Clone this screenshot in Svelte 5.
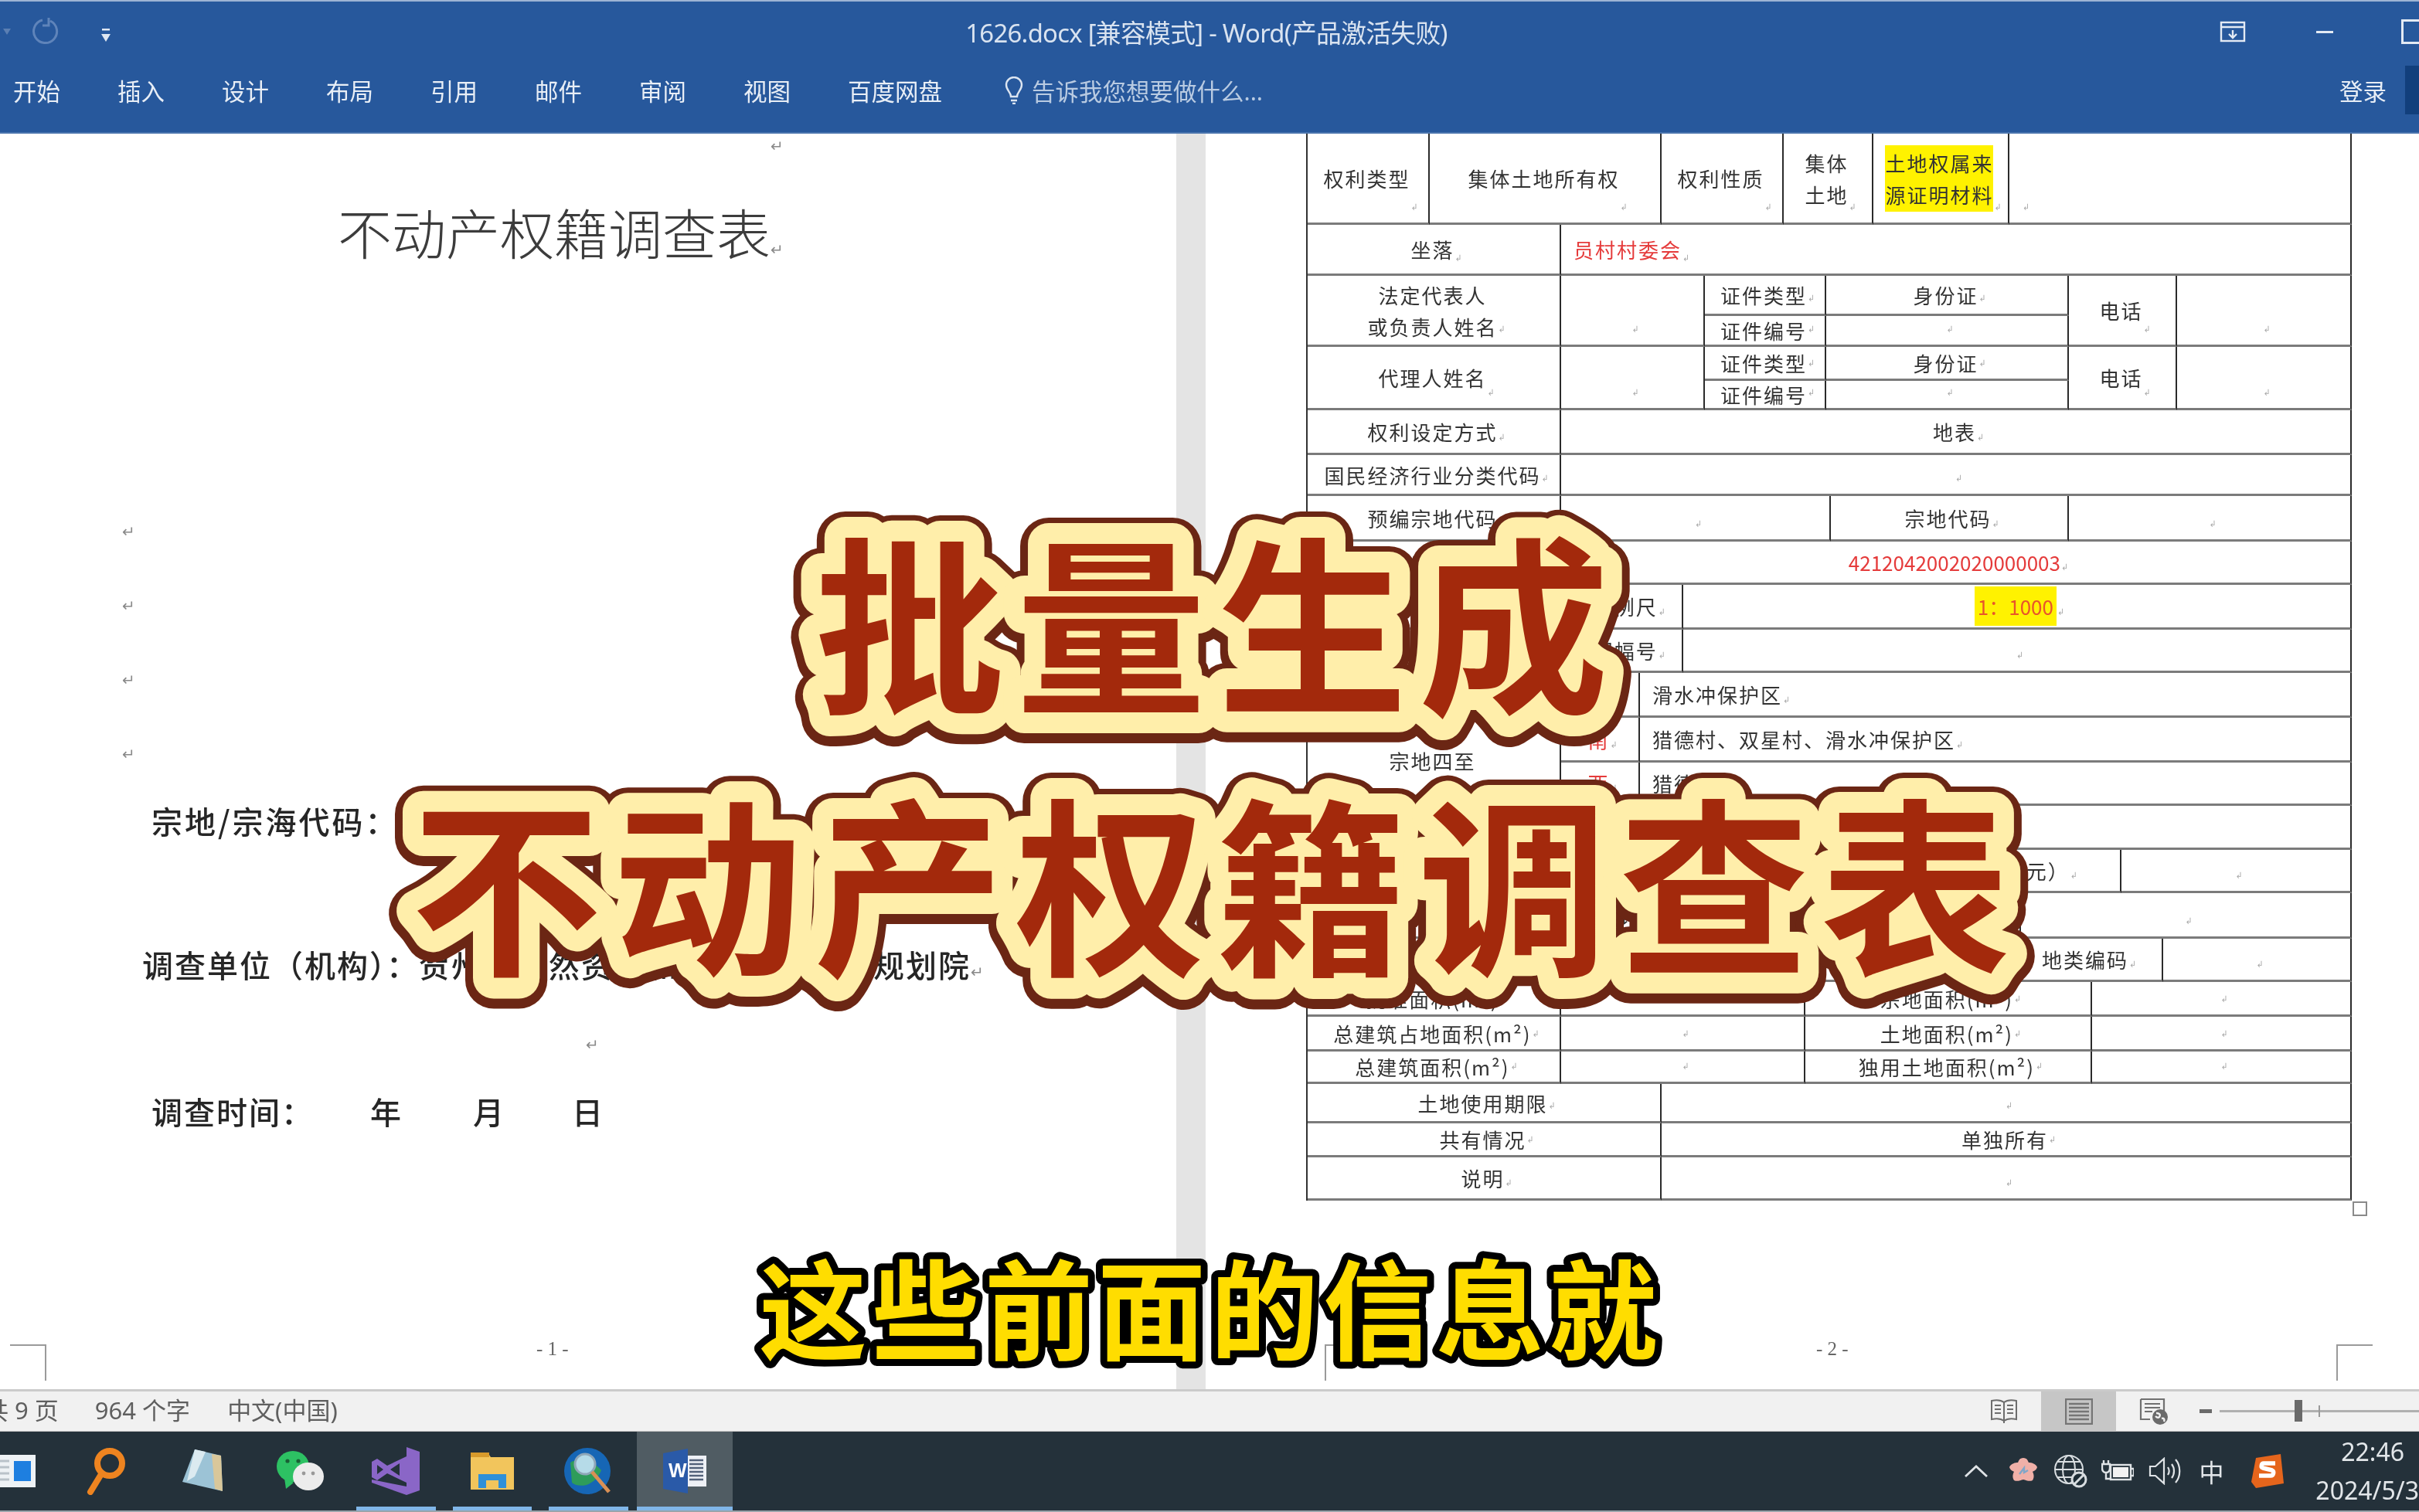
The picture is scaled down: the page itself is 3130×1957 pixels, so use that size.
<script>
    const tabs = ["开始", "插入", "设计", "布局", "引用", "邮件", "审阅", "视图", "百度网盘"];

    // cell: [x1, x2, y1, y2, text, style] in page pixels
    const cells = [
        [1690, 1848, 172, 290, "权利类型"],
        [1848, 2148, 172, 290, "集体土地所有权"],
        [2148, 2306, 172, 290, "权利性质"],
        [2306, 2422, 172, 290, "集体\n土地"],
        [2422, 2598, 172, 290, "土地权属来\n源证明材料", "hl"],
        [2598, 3041, 172, 290, "", "left"],
        [1690, 2018, 290, 356, "坐落"],
        [2018, 3041, 290, 356, "员村村委会", "left red"],
        [1690, 2018, 356, 448, "法定代表人\n或负责人姓名"],
        [2018, 2204, 356, 448, ""],
        [2204, 2361, 356, 408, "证件类型"],
        [2361, 2675, 356, 408, "身份证"],
        [2204, 2361, 408, 448, "证件编号"],
        [2361, 2675, 408, 448, ""],
        [2675, 2815, 356, 448, "电话"],
        [2815, 3041, 356, 448, ""],
        [1690, 2018, 448, 530, "代理人姓名"],
        [2018, 2204, 448, 530, ""],
        [2204, 2361, 448, 492, "证件类型"],
        [2361, 2675, 448, 492, "身份证"],
        [2204, 2361, 492, 530, "证件编号"],
        [2361, 2675, 492, 530, ""],
        [2675, 2815, 448, 530, "电话"],
        [2815, 3041, 448, 530, ""],
        [1690, 2018, 530, 588, "权利设定方式"],
        [2018, 3041, 530, 588, "地表"],
        [1690, 2018, 588, 641, "国民经济行业分类代码"],
        [2018, 3041, 588, 641, ""],
        [1690, 2018, 641, 700, "预编宗地代码"],
        [2018, 2367, 641, 700, ""],
        [2367, 2675, 641, 700, "宗地代码"],
        [2675, 3041, 641, 700, ""],
        [1690, 2018, 700, 756, "不动产单元号"],
        [2018, 3041, 700, 756, "4212042002020000003", "red num"],
        [1690, 2176, 756, 814, "比例尺", "right near"],
        [2176, 3041, 756, 814, "1：1000", "hl orange num"],
        [1690, 2176, 814, 870, "图幅号", "right near"],
        [2176, 3041, 814, 870, ""],
        [1690, 2018, 870, 1099, "宗地四至"],
        [2018, 2120, 870, 928, "东", "red"],
        [2120, 3041, 870, 928, "滑水冲保护区", "left"],
        [2018, 2120, 928, 986, "南", "red"],
        [2120, 3041, 928, 986, "猎德村、双星村、滑水冲保护区", "left"],
        [2018, 2120, 986, 1042, "西", "red"],
        [2120, 3041, 986, 1042, "猎德村", "left"],
        [2018, 2120, 1042, 1099, "北", "red"],
        [2120, 3041, 1042, 1099, "", "left"],
        [1690, 2018, 1099, 1155, "等级"],
        [2018, 2743, 1099, 1155, "价格（万元）", "right"],
        [2743, 3041, 1099, 1155, ""],
        [1690, 2613, 1155, 1214, "许可用途"],
        [2613, 3041, 1155, 1214, ""],
        [1690, 2600, 1214, 1270, "批准用途"],
        [2600, 2797, 1214, 1270, "地类编码"],
        [2797, 3041, 1214, 1270, ""],
        [1690, 2018, 1270, 1315, "批准面积(m²)"],
        [2018, 2334, 1270, 1315, ""],
        [2334, 2705, 1270, 1315, "宗地面积(m²)"],
        [2705, 3041, 1270, 1315, ""],
        [1690, 2018, 1315, 1360, "总建筑占地面积(m²)"],
        [2018, 2334, 1315, 1360, ""],
        [2334, 2705, 1315, 1360, "土地面积(m²)"],
        [2705, 3041, 1315, 1360, ""],
        [1690, 2018, 1360, 1402, "总建筑面积(m²)"],
        [2018, 2334, 1360, 1402, ""],
        [2334, 2705, 1360, 1402, "独用土地面积(m²)"],
        [2705, 3041, 1360, 1402, ""],
        [1690, 2148, 1402, 1453, "土地使用期限"],
        [2148, 3041, 1402, 1453, ""],
        [1690, 2148, 1453, 1497, "共有情况"],
        [2148, 3041, 1453, 1497, "单独所有"],
        [1690, 2148, 1497, 1553, "说明"],
        [2148, 3041, 1497, 1553, ""],
    ];

    const xs = [...new Set(cells.flatMap((c) => [c[0], c[1]]))].sort((a, b) => a - b);
    const ys = [...new Set(cells.flatMap((c) => [c[2], c[3]]))].sort((a, b) => a - b);
    const track = (list) => list.slice(1).map((v, i) => `${v - list[i]}px`).join(" ");
    const area = (c) =>
        `grid-area:${ys.indexOf(c[2]) + 1}/${xs.indexOf(c[0]) + 1}/${ys.indexOf(c[3]) + 1}/${xs.indexOf(c[1]) + 1}`;
    const isHl = (c) => (c[5] || "").includes("hl");
</script>

<div class="screen">
    <header class="ribbon">
        <div class="titlerow">
            <div class="qat">
                <svg width="12" height="10" viewBox="0 0 12 10"><path d="M1 1h10L6 9z" fill="#5b7fb3" /></svg>
                <svg class="undo" width="38" height="38" viewBox="0 0 38 38" fill="none" stroke="#5f84ba" stroke-width="3"><path d="M14 4a15 15 0 1 0 10 1M22 1v10h-8" /></svg>
                <svg class="more" width="14" height="18" viewBox="0 0 14 18" fill="#dfe7f2"><rect x="2" y="0" width="10" height="2.5" /><path d="M1 7h12l-6 10z" /></svg>
            </div>
            <div class="doc-title">1626.docx [兼容模式] - Word(产品激活失败)</div>
            <div class="winctl">
                <svg width="34" height="28" viewBox="0 0 34 28" fill="none" stroke="#e3eaf4" stroke-width="2.4"><rect x="2" y="2" width="30" height="24" /><path d="M2 8h30M17 12v10M12 17l5 5 5-5" /></svg>
                <i class="minimize"></i>
                <i class="restore"></i>
            </div>
        </div>
        <nav class="tabrow">
            {#each tabs as tab}
                <span>{tab}</span>
            {/each}
            <svg class="bulb" width="24" height="36" viewBox="0 0 24 36" fill="none" stroke="#dce5f1" stroke-width="2.4"><path d="M8 26c0-6-6-8-6-15a10 10 0 0 1 20 0c0 7-6 9-6 15zM8 31h8M10 35h4" /></svg>
            <span class="hint">告诉我您想要做什么...</span>
            <span class="login">登录</span>
            <i class="account"></i>
        </nav>
    </header>

    <main class="workspace">
        <section class="page left-page">
            <span class="ret top-ret">↵</span>
            <h1>不动产权籍调查表<span class="ret">↵</span></h1>
            <div class="blank-marks">
                <span class="ret">↵</span>
                <span class="ret">↵</span>
                <span class="ret">↵</span>
                <span class="ret">↵</span>
            </div>
            <p class="field code">宗地/宗海代码：</p>
            <p class="field org">调查单位（机构）：贺州市自然资源和城乡空间调查规划院<span class="ret">↵</span></p>
            <span class="ret mid-ret">↵</span>
            <p class="field date">
                <span>调查时间：</span><span class="y">年</span><span class="m">月</span><span class="d">日</span>
            </p>
            <i class="crop crop-a"></i>
            <span class="page-no no-1">- 1 -</span>
        </section>

        <div class="gutter"></div>

        <section class="page right-page">
            <div class="form" style="grid-template-columns:{track(xs)};grid-template-rows:{track(ys)}">
                {#each cells as c}
                    <div class="cell {c[5] || ''}" style={area(c)}>
                        {#if isHl(c)}
                            <span class="mark">{c[4]}</span>
                        {:else}
                            {c[4]}
                        {/if}
                    </div>
                {/each}
            </div>
            <i class="table-end"></i>
            <i class="crop crop-b"></i>
            <i class="crop crop-c"></i>
            <span class="page-no no-2">- 2 -</span>
        </section>
    </main>

    <footer class="status">
        <span class="count">共 9 页</span>
        <span class="words">964 个字</span>
        <span class="lang">中文(中国)</span>
        <div class="views">
            <div class="view">
                <svg width="36" height="34" viewBox="0 0 36 34" fill="none" stroke="#6d6d6d" stroke-width="2"><path d="M18 5C14 2 7 2 2 3v24c5-1 12-1 16 2 4-3 11-3 16-2V3c-5-1-12-1-16 2zM18 5v27M6 9h8M6 14h8M6 19h8M22 9h8M22 14h8M22 19h8" /></svg>
            </div>
            <div class="view active">
                <svg width="36" height="34" viewBox="0 0 36 34" fill="none" stroke="#757575" stroke-width="2.4"><rect x="1" y="1" width="34" height="32" /><path d="M5 7h26M5 12h26M5 17h26M5 22h26M5 27h26" /></svg>
            </div>
            <div class="view">
                <svg width="38" height="36" viewBox="0 0 38 36"><path d="M2 2h30v20M2 2v26h12M7 8h20M7 13h20M7 18h10" fill="none" stroke="#707070" stroke-width="2.2" /><circle cx="27" cy="25" r="10" fill="#6a6a6a" /><path d="M22 20c4 0 6 2 4 5-2 2-4 0-5-1M29 27c3-1 4 1 3 4" stroke="#f1f1f1" stroke-width="2.4" fill="none" /></svg>
            </div>
        </div>
        <i class="zoom-minus"></i>
        <div class="zoom-track"><i class="zoom-tick"></i><i class="zoom-thumb"></i></div>
    </footer>

    <footer class="taskbar">
        <div class="slot">
            <svg width="64" height="42" viewBox="0 0 64 42"><rect width="64" height="42" fill="#eef2f5" /><rect x="36" y="8" width="22" height="26" fill="#1e7fe0" /><path d="M6 8h24M6 16h24M6 24h24M6 32h24" stroke="#b9c2c9" stroke-width="3" /></svg>
        </div>
        <div class="slot">
            <svg width="56" height="62" viewBox="0 0 56 62" fill="none" stroke="#ee8420" stroke-width="8"><circle cx="31" cy="21" r="16" /><path d="M20 35L6 58" stroke-linecap="round" /></svg>
        </div>
        <div class="slot">
            <svg width="58" height="60" viewBox="0 0 58 60"><path d="M18 2l34 8 2 46L2 44z" fill="#9cc3d6" /><path d="M40 8l12 2 2 46-10-3z" fill="#d9c79a" /><path d="M18 2l14 3-14 32-10 6z" fill="#dbeaf0" /></svg>
        </div>
        <div class="slot">
            <svg width="64" height="54" viewBox="0 0 64 54"><ellipse cx="23" cy="21" rx="21" ry="20" fill="#2dc163" /><path d="M12 36l2 14 10-8z" fill="#2dc163" /><ellipse cx="43" cy="34" rx="20" ry="18" fill="#ececec" /><circle cx="16" cy="14" r="2.6" fill="#1a5f35" /><circle cx="30" cy="14" r="2.6" fill="#1a5f35" /><circle cx="37" cy="30" r="2.4" fill="#999" /><circle cx="49" cy="30" r="2.4" fill="#999" /></svg>
        </div>
        <div class="slot open">
            <svg width="62" height="62" viewBox="0 0 62 62" fill="#8a66c7"><path d="M45 0l17 6v50l-17 6L0 46v-4l45 9z" /><path d="M45 12v34L20 34 7 43 0 39V19l7-4 13 9zM7 23v12l8-6zM24 29l12 8V21z" fill-rule="evenodd" /></svg>
        </div>
        <div class="slot open">
            <svg width="56" height="48" viewBox="0 0 56 48"><path d="M0 0h22l4 6h30v42H0z" fill="#f2c55c" /><rect y="0" width="24" height="6" fill="#d79a2b" /><path d="M10 46V28h36v18h-10V36H20v10z" fill="#2f90d8" /></svg>
        </div>
        <div class="slot open">
            <svg width="62" height="62" viewBox="0 0 62 62"><circle cx="30" cy="31" r="30" fill="#1666b5" /><path d="M8 20c14-8 30-2 40 10-8 20-28 24-38 16z" fill="#2e9c5a" /><circle cx="27" cy="22" r="13" fill="#b6dbe8" stroke="#8fa7b8" stroke-width="3" /><path d="M36 32l22 26" stroke="#d99055" stroke-width="5" /></svg>
        </div>
        <div class="slot open active">
            <svg width="56" height="58" viewBox="0 0 56 58"><rect x="24" y="9" width="32" height="40" fill="#eef1f6" /><path d="M34 15h18M34 20h18M34 25h18M34 30h18M34 35h18M34 40h18" stroke="#53627a" stroke-width="2.4" /><path d="M0 6L32 0v58L0 52z" fill="#2a5aa8" /><text class="w" x="7" y="37">W</text></svg>
        </div>

        <div class="tray">
            <div class="tray-icon">
                <svg width="30" height="16" viewBox="0 0 30 16" fill="none" stroke="#dfe3e6" stroke-width="2.8"><path d="M1 15L15 2l14 13" /></svg>
            </div>
            <div class="tray-icon">
                <svg width="38" height="36" viewBox="0 0 38 36"><path d="M19 1c5 0 6 4 7 6 3 0 9 1 11 6-1 4-5 5-6 6 1 2 3 6 0 11-4 2-8 0-12-1-4 1-8 3-12 1-3-5-1-9 0-11-1-1-5-2-6-6 2-5 8-6 11-6 1-2 2-6 7-6z" fill="#f0b0a8" /><path d="M14 22l6-8v6l5-3" stroke="#7fa6c9" stroke-width="2.4" fill="none" /></svg>
            </div>
            <div class="tray-icon">
                <svg width="44" height="44" viewBox="0 0 44 44" fill="none" stroke="#d8dde0" stroke-width="2"><circle cx="20" cy="20" r="18" /><ellipse cx="20" cy="20" rx="8" ry="18" /><path d="M2 20h36M5 10h30M5 30h30" /><circle cx="33" cy="33" r="9" fill="#1e2d36" stroke-width="3" /><path d="M27 39L39 27" stroke-width="3" /></svg>
            </div>
            <div class="tray-icon">
                <svg width="42" height="30" viewBox="0 0 42 30" fill="none" stroke="#dfe3e6" stroke-width="2.4"><rect x="12" y="7" width="26" height="19" /><rect x="15" y="10" width="20" height="13" fill="#f2f2f2" stroke="none" /><path d="M39 12h3v9h-3M3 1v5M9 1v5M1 6h10v5c0 4-2 6-5 6s-5-2-5-6zM6 17v8h6" /></svg>
            </div>
            <div class="tray-icon">
                <svg width="42" height="36" viewBox="0 0 42 36" fill="none" stroke="#dfe3e6" stroke-width="2.2"><path d="M2 12h7L20 2v32L9 24H2zM25 13c2 3 2 7 0 10M30 9c4 5 4 13 0 18M35 3c7 8 7 22 0 30" /></svg>
            </div>
            <span class="ime">中</span>
            <div class="tray-icon sogou">
                <svg width="42" height="44" viewBox="0 0 42 44"><path d="M6 5l32-5 4 38-36 6-6-8z" fill="#e5651c" /><path d="M31 12H16c-3 0-4 5-1 6l12 3c3 1 2 7-2 7H10" stroke="#fff" stroke-width="5.5" fill="none" /></svg>
            </div>
            <div class="clock">
                <span class="time">22:46</span>
                <span>2024/5/3</span>
            </div>
        </div>
    </footer>

    <svg class="overlay" viewBox="0 0 3130 1957" width="3130" height="1957">
        <defs>
            <g id="headline">
                <text x="1054" y="905">批量生成</text>
                <text x="532" y="1243">不动产权籍调查表</text>
            </g>
        </defs>
        <g class="rim" transform="translate(0 3)"><use href="#headline" /></g>
        <g class="halo"><use href="#headline" /></g>
        <g class="ink"><use href="#headline" /></g>
        <text class="caption" x="982" y="1749">这些前面的信息就</text>
    </svg>
</div>

<style>
    :global(body) {
        margin: 0;
        background: #fff;
    }

    .screen {
        position: relative;
        width: 3130px;
        height: 1957px;
        overflow: hidden;
        display: flex;
        flex-direction: column;
        font-family: "Noto Sans", "Noto Sans CJK SC", sans-serif;
    }

    .ribbon {
        height: 173px;
        flex: none;
        box-sizing: border-box;
        border-top: 2px solid #9db4d4;
        border-bottom: 2px solid #4a74ad;
        background: #27589c;
        color: #e8eef6;
        filter: blur(0.5px);
    }

    .titlerow {
        height: 78px;
        display: grid;
        grid-template-columns: 1fr auto 1fr;
        align-items: center;
    }

    .qat {
        display: flex;
        align-items: center;
        padding-left: 3px;
    }

    .undo {
        margin-left: 26px;
    }

    .more {
        margin-left: 51px;
        margin-top: 10px;
    }

    .doc-title {
        font-size: 32.8px;
        letter-spacing: -0.7px;
        color: #d9e3f0;
        margin-right: 8px;
    }

    .winctl {
        display: flex;
        align-items: center;
        justify-content: flex-end;
    }

    .minimize {
        width: 22px;
        height: 3px;
        background: #e3eaf4;
        margin-left: 91px;
    }

    .restore {
        width: 20px;
        height: 26px;
        border: 3px solid #e3eaf4;
        border-right: 0;
        margin-left: 88px;
    }

    .tabrow {
        height: 91px;
        display: flex;
        align-items: center;
        gap: 74px;
        padding-left: 17px;
        font-size: 30.5px;
        padding-bottom: 18px;
        box-sizing: border-box;
    }

    .bulb {
        margin: 0 -63px 0 7px;
    }

    .hint {
        color: #b9cbe2;
    }

    .login {
        margin-left: auto;
    }

    .account {
        width: 18px;
        height: 63px;
        background: #123f7c;
        margin-left: -50px;
    }

    .workspace {
        flex: 1;
        display: flex;
        min-height: 0;
        filter: blur(0.6px);
    }

    .page {
        position: relative;
        background: #fff;
        color: #2b2b2b;
        font-family: "Noto Sans CJK SC", sans-serif;
    }

    .left-page {
        width: 1522px;
        flex: none;
    }

    .gutter {
        width: 38px;
        flex: none;
        background: #e4e4e4;
    }

    .right-page {
        flex: 1;
    }

    .ret {
        font-family: "DejaVu Sans", sans-serif;
        font-size: 20px;
        font-weight: 400;
        color: #8a8a8a;
        letter-spacing: 0;
    }

    .top-ret {
        position: absolute;
        left: 997px;
        top: 4px;
    }

    h1 {
        margin: 77px 0 0 437px;
        font-size: 70px;
        font-weight: 300;
        line-height: 100px;
        color: #3c3c3c;
    }

    .blank-marks {
        display: flex;
        flex-direction: column;
        gap: 71px;
        margin: 303px 0 0 158px;
    }

    .blank-marks .ret {
        line-height: 25px;
    }

    .field {
        margin: 0;
        font-size: 40px;
        font-weight: 500;
        line-height: 56px;
        color: #262626;
        white-space: nowrap;
    }

    .code {
        margin: 45px 0 0 196px;
        letter-spacing: 3px;
    }

    .org {
        margin: 130px 0 0 184px;
        letter-spacing: 2px;
    }

    .mid-ret {
        display: block;
        margin: 54px 0 0 758px;
        line-height: 25px;
    }

    .date {
        margin: 45px 0 0 196px;
        display: flex;
        letter-spacing: 2px;
    }

    .y {
        margin-left: 73px;
    }

    .m {
        margin-left: 91px;
    }

    .d {
        margin-left: 86px;
    }

    .crop {
        position: absolute;
        top: 1567px;
        width: 47px;
        height: 47px;
        box-sizing: border-box;
        border-top: 2px solid #9a9a9a;
    }

    .crop-a {
        left: 13px;
        border-right: 2px solid #9a9a9a;
    }

    .crop-b {
        left: 154px;
        border-left: 2px solid #9a9a9a;
    }

    .crop-c {
        left: 1463px;
        border-left: 2px solid #9a9a9a;
    }

    .page-no {
        position: absolute;
        top: 1558px;
        font-size: 25px;
        line-height: 30px;
        color: #666;
        font-family: "Liberation Serif", serif;
        white-space: pre;
    }

    .no-1 {
        left: 694px;
    }

    .no-2 {
        left: 790px;
    }

    .form {
        display: grid;
        margin-left: 130px;
        width: max-content;
        border-left: 2px solid #333;
        font-size: 26px;
        letter-spacing: 2px;
        color: #333;
    }

    .cell {
        box-sizing: border-box;
        border-right: 2px solid #2b2b2b;
        border-bottom: 3px solid #7b7b7b;
        display: flex;
        align-items: center;
        justify-content: center;
        text-align: center;
        white-space: pre-line;
        line-height: 41px;
        overflow: hidden;
    }

    .cell::after {
        content: "↲";
        font-family: "DejaVu Sans", sans-serif;
        font-size: 11px;
        line-height: 14px;
        color: #aaa;
        align-self: flex-end;
        margin: 0 -7px 12px 1px;
        letter-spacing: 0;
    }

    .left {
        justify-content: flex-start;
        padding-left: 16px;
    }

    .right {
        justify-content: flex-end;
        padding-right: 62px;
    }

    .right.near {
        padding-right: 28px;
    }

    .red {
        color: #e53b3b;
    }

    .num {
        letter-spacing: 0;
    }

    .hl .mark {
        background: #fff200;
        color: #333;
        padding: 2px 0;
    }

    .orange .mark {
        color: #e8552b;
        padding: 5px 4px;
    }

    .table-end {
        position: absolute;
        left: 1484px;
        top: 1382px;
        width: 19px;
        height: 19px;
        border: 2px solid #8a8a8a;
        box-sizing: border-box;
    }

    .status {
        height: 55px;
        flex: none;
        box-sizing: border-box;
        border-top: 3px solid #cbcbcb;
        border-bottom: 1px solid #c4c4c4;
        background: #f1f1f1;
        display: flex;
        align-items: center;
        font-size: 31px;
        color: #5f5f5f;
        filter: blur(0.5px);
    }

    .count {
        margin-left: -20px;
        white-space: nowrap;
        padding-bottom: 6px;
    }

    .words {
        margin-left: 47px;
        white-space: nowrap;
        padding-bottom: 6px;
    }

    .lang {
        margin-left: 48px;
        padding-bottom: 6px;
    }

    .views {
        display: flex;
        align-self: stretch;
        margin-left: auto;
    }

    .view {
        width: 97px;
        display: flex;
        align-items: center;
        justify-content: center;
    }

    .view.active {
        background: #c6c6c6;
    }

    .zoom-minus {
        width: 16px;
        height: 5px;
        background: #6a6a6a;
        margin-left: 11px;
    }

    .zoom-track {
        position: relative;
        width: 258px;
        height: 3px;
        background: #b0b0b0;
        margin-left: 10px;
    }

    .zoom-thumb {
        position: absolute;
        left: 97px;
        top: -13px;
        width: 10px;
        height: 28px;
        background: #6a6a6a;
    }

    .zoom-tick {
        position: absolute;
        left: 128px;
        top: -6px;
        width: 2px;
        height: 15px;
        background: #9a9a9a;
    }

    .taskbar {
        height: 104px;
        flex: none;
        box-sizing: border-box;
        border-bottom: 2px solid #9aa4aa;
        background: #24313a;
        display: flex;
        align-items: stretch;
        padding-left: 0;
        filter: blur(0.5px);
    }

    .slot {
        position: relative;
        width: 124.5px;
        flex: none;
        display: flex;
        align-items: center;
        justify-content: center;
    }

    .slot:first-child {
        margin-left: -48px;
    }

    .slot.open::after {
        content: "";
        position: absolute;
        left: 11px;
        right: 11px;
        bottom: 0;
        height: 5px;
        background: #80b6e8;
    }

    .slot.active {
        background: #505c63;
    }

    .slot.active::after {
        left: 0;
        right: 0;
    }

    .w {
        font-family: "Liberation Sans", sans-serif;
        font-size: 25px;
        font-weight: 700;
        fill: #fff;
    }

    .tray {
        margin-left: auto;
        display: flex;
        align-items: center;
        color: #e2e6e9;
    }

    .tray-icon {
        width: 61px;
        display: flex;
        justify-content: center;
    }

    .ime {
        width: 61px;
        text-align: center;
        font-size: 32px;
        font-family: "Noto Sans CJK SC", sans-serif;
    }

    .sogou {
        width: 83px;
    }

    .clock {
        width: 155px;
        display: flex;
        flex-direction: column;
        align-items: flex-end;
        font-size: 32px;
        line-height: 50px;
        white-space: nowrap;
    }

    .time {
        margin-right: 19px;
    }

    .overlay {
        position: absolute;
        left: 0;
        top: 0;
        pointer-events: none;
        font-family: "Noto Sans CJK SC", sans-serif;
        font-weight: 700;
        font-size: 246px;
        letter-spacing: 14.5px;
    }

    .rim {
        fill: #6b2614;
        stroke: #6b2614;
        stroke-width: 74px;
        stroke-linejoin: round;
    }

    .halo {
        fill: #ffeeaa;
        stroke: #ffeeaa;
        stroke-width: 54px;
        stroke-linejoin: round;
    }

    .ink {
        fill: #a3290c;
    }

    .caption {
        font-size: 140px;
        letter-spacing: 6px;
        font-weight: 700;
        fill: #ffdd00;
        stroke: #000;
        stroke-width: 18px;
        stroke-linejoin: round;
        paint-order: stroke fill;
    }
</style>
